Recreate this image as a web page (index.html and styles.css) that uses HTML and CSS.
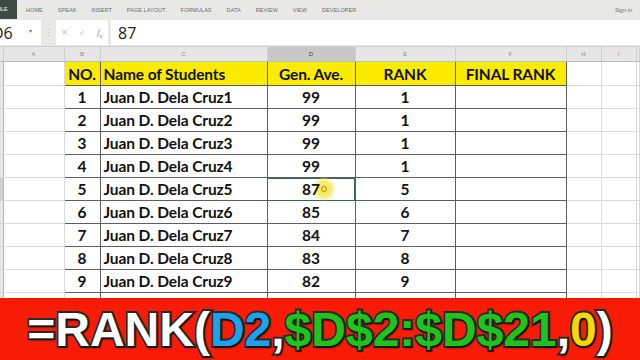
FILE: index.html
```html
<!DOCTYPE html>
<html lang="en">
<head>
    <meta charset="UTF-8">
    <title>RANK</title>
    <link rel="stylesheet" href="styles.css">
</head>
<body>
    <div class="ribbon">
        <span class="tab file">FILE</span>
        <span class="tab">HOME</span>
        <span class="tab">SPEAK</span>
        <span class="tab">INSERT</span>
        <span class="tab">PAGE LAYOUT</span>
        <span class="tab">FORMULAS</span>
        <span class="tab">DATA</span>
        <span class="tab">REVIEW</span>
        <span class="tab">VIEW</span>
        <span class="tab">DEVELOPER</span>
        <span class="signin">Sign in</span>
    </div>

    <div class="fbar">
        <div class="namebox">D6<span class="arrow">&#9662;</span></div>
        <div class="grip">&#8942;</div>
        <div class="fbtns">
            <span>&#10005;</span>
            <span>&#10003;</span>
            <span class="fx"><i>f</i><sub>x</sub></span>
        </div>
        <div class="finput">87</div>
    </div>

    <div class="sheet">
        <table>
            <colgroup>
                <col class="c-rh"><col class="c-a"><col class="c-b"><col class="c-c">
                <col class="c-d"><col class="c-e"><col class="c-f"><col class="c-h"><col class="c-i"><col>
            </colgroup>
            <tr class="colhead">
                <th></th><th>A</th><th>B</th><th>C</th><th class="sel">D</th><th>E</th><th>F</th><th>H</th><th>I</th><th></th>
            </tr>
            <tr class="hdr">
                <td class="rh"></td><td class="g"></td>
                <td class="t ctr">NO.</td><td class="t">Name of Students</td><td class="t ctr">Gen. Ave.</td>
                <td class="t ctr">RANK</td><td class="t ctr">FINAL RANK</td>
                <td class="g"></td><td class="g"></td><td class="g"></td>
            </tr>
            <tr><td class="rh"></td><td class="g"></td><td class="t ctr">1</td><td class="t">Juan D. Dela Cruz1</td><td class="t ctr">99</td><td class="t ctr">1</td><td class="t"></td><td class="g"></td><td class="g"></td><td class="g"></td></tr>
            <tr><td class="rh"></td><td class="g"></td><td class="t ctr">2</td><td class="t">Juan D. Dela Cruz2</td><td class="t ctr">99</td><td class="t ctr">1</td><td class="t"></td><td class="g"></td><td class="g"></td><td class="g"></td></tr>
            <tr><td class="rh"></td><td class="g"></td><td class="t ctr">3</td><td class="t">Juan D. Dela Cruz3</td><td class="t ctr">99</td><td class="t ctr">1</td><td class="t"></td><td class="g"></td><td class="g"></td><td class="g"></td></tr>
            <tr><td class="rh"></td><td class="g"></td><td class="t ctr">4</td><td class="t">Juan D. Dela Cruz4</td><td class="t ctr">99</td><td class="t ctr">1</td><td class="t"></td><td class="g"></td><td class="g"></td><td class="g"></td></tr>
            <tr><td class="rh on"></td><td class="g"></td><td class="t ctr">5</td><td class="t">Juan D. Dela Cruz5</td><td class="t ctr active"><span class="cursor"></span><span class="val">87</span></td><td class="t ctr">5</td><td class="t"></td><td class="g"></td><td class="g"></td><td class="g"></td></tr>
            <tr><td class="rh"></td><td class="g"></td><td class="t ctr">6</td><td class="t">Juan D. Dela Cruz6</td><td class="t ctr">85</td><td class="t ctr">6</td><td class="t"></td><td class="g"></td><td class="g"></td><td class="g"></td></tr>
            <tr><td class="rh"></td><td class="g"></td><td class="t ctr">7</td><td class="t">Juan D. Dela Cruz7</td><td class="t ctr">84</td><td class="t ctr">7</td><td class="t"></td><td class="g"></td><td class="g"></td><td class="g"></td></tr>
            <tr><td class="rh"></td><td class="g"></td><td class="t ctr">8</td><td class="t">Juan D. Dela Cruz8</td><td class="t ctr">83</td><td class="t ctr">8</td><td class="t"></td><td class="g"></td><td class="g"></td><td class="g"></td></tr>
            <tr><td class="rh"></td><td class="g"></td><td class="t ctr">9</td><td class="t">Juan D. Dela Cruz9</td><td class="t ctr">82</td><td class="t ctr">9</td><td class="t"></td><td class="g"></td><td class="g"></td><td class="g"></td></tr>
            <tr class="peek"><td class="rh"></td><td class="g"></td><td class="t ctr">10</td><td class="t">Juan D. Dela Cruz10</td><td class="t ctr">80</td><td class="t ctr">10</td><td class="t"></td><td class="g"></td><td class="g"></td><td class="g"></td></tr>
        </table>
    </div>

    <div class="banner">
        <span>=RANK(</span><span class="blue">D2</span><span>,</span><span class="green">$D$2:$D$21</span><span>,</span><span class="yellow">0</span><span>)</span>
    </div>
</body>
</html>
```

FILE: styles.css
```css
body {
    margin: 0;
    width: 640px;
    height: 360px;
    overflow: hidden;
    background-color: #ffffff;
    font-family: "Liberation Sans", Arial, sans-serif;
}

/* ribbon tabs */
.ribbon {
    height: 19px;
    background-color: #e8e8e6;
    display: flex;
    align-items: center;
    font-size: 5.6px;
    color: #6d6d6d;
}
.tab {
    margin-right: 15px;
}
.tab.file {
    background-color: #3d4a42;
    color: #f4f4f4;
    height: 19px;
    line-height: 19px;
    width: 17px;
    overflow: hidden;
    white-space: nowrap;
    text-indent: -4px;
    margin-right: 9px;
}
.signin {
    margin-left: auto;
    margin-right: 8px;
}

/* formula bar */
.fbar {
    height: 27px;
    background-color: #e8e8e6;
    display: flex;
    align-items: center;
    border-bottom: 1px solid #cfcfcf;
}
.namebox {
    width: 41px;
    height: 25px;
    background-color: #ffffff;
    display: flex;
    align-items: center;
    font-family: "Open Sans", sans-serif;
    font-size: 16px;
    color: #222;
    text-indent: -8px;
    position: relative;
    overflow: hidden;
}
.arrow {
    position: absolute;
    right: 4px;
    top: 7px;
    font-size: 6px;
    color: #777;
}
.grip {
    width: 15px;
    text-align: center;
    color: #b5b5b5;
    font-size: 9px;
}
.fbtns {
    width: 52px;
    height: 25px;
    background-color: #ffffff;
    display: flex;
    align-items: center;
    justify-content: space-around;
    color: #c2c2c2;
    font-size: 8px;
}
.fbtns .fx {
    color: #8a8a8a;
    font-family: "Liberation Serif", serif;
    font-size: 9px;
}
.fbtns sub {
    font-size: 6px;
}
.finput {
    margin-left: 3px;
    flex: 1;
    height: 25px;
    background-color: #ffffff;
    display: flex;
    align-items: center;
    padding-left: 7px;
    font-family: "Open Sans", sans-serif;
    font-size: 16px;
    color: #222;
}

/* sheet grid */
.sheet {
    height: 251px;
    overflow: hidden;
}
table {
    border-collapse: collapse;
    table-layout: fixed;
    width: 640px;
}
.c-rh { width: 3px; }
.c-a { width: 61px; }
.c-b { width: 36px; }
.c-c { width: 167px; }
.c-d { width: 88px; }
.c-e { width: 100px; }
.c-f { width: 111px; }
.c-h { width: 35px; }
.c-i { width: 35px; }

.colhead th {
    height: 14px;
    padding: 0;
    background-color: #e6e6e6;
    color: #8a8a8a;
    font-weight: normal;
    font-size: 6px;
    border-right: 1px solid #d0d0d0;
    border-bottom: 1px solid #bdbdbd;
}
.colhead th.sel {
    background-color: #c8c8c8;
    color: #444;
}
td {
    height: 22px;
    padding: 0 3px;
    white-space: nowrap;
    overflow: hidden;
    font-family: Lato, "Open Sans", sans-serif;
    font-weight: bold;
    font-size: 15.5px;
    letter-spacing: -0.1px;
    color: #111;
}
.hdr td {
    height: 23px;
}
td.rh {
    padding: 0;
    background-color: #e6e6e6;
    border-right: 1px solid #b8b8b8;
    border-bottom: 1px solid #d6d6d6;
}
td.rh.on {
    background-color: #cfcfcf;
}
td.g {
    border-right: 1px solid #dadada;
    border-bottom: 1px solid #dadada;
}
td.t {
    border: 1px solid #5e5e5e;
}
.hdr td.t {
    background-color: #fbeb00;
}
.ctr {
    text-align: center;
}
td.active {
    position: relative;
    outline: 1px solid #2b6e47;
    outline-offset: -1px;
    overflow: visible;
}
.val {
    position: relative;
}
.cursor {
    position: absolute;
    left: 44px;
    top: -1px;
    width: 24px;
    height: 24px;
    border-radius: 50%;
    background: radial-gradient(circle, #f4e54a 0, #f7ec78 45%, rgba(250, 242, 130, 0) 72%);
}
.cursor::after {
    content: "";
    position: absolute;
    left: 9px;
    top: 9px;
    width: 4px;
    height: 4px;
    border: 1px solid #c08a00;
    border-radius: 50%;
}

/* formula banner */
.banner {
    height: 62px;
    background-color: #f81c06;
    display: flex;
    align-items: center;
    justify-content: center;
    font-family: "Liberation Sans", Arial, sans-serif;
    font-weight: bold;
    font-size: 48px;
    color: #ffffff;
    -webkit-text-stroke: 4px #2a2a2a;
    paint-order: stroke fill;
    text-shadow: 1px 2px 2px rgba(0, 0, 0, 0.6);
}
.blue { color: #1aa3ec; }
.green { color: #1cc41c; }
.yellow { color: #f7d800; }
```
